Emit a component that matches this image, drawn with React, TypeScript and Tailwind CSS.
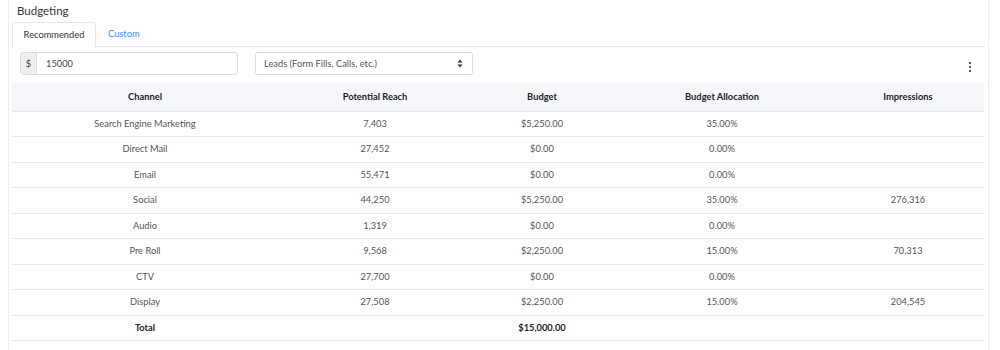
import React from 'react'

const rows = [
  { channel: 'Search Engine Marketing', reach: '7,403', budget: '$5,250.00', alloc: '35.00%', imp: '' },
  { channel: 'Direct Mail', reach: '27,452', budget: '$0.00', alloc: '0.00%', imp: '' },
  { channel: 'Email', reach: '55,471', budget: '$0.00', alloc: '0.00%', imp: '' },
  { channel: 'Social', reach: '44,250', budget: '$5,250.00', alloc: '35.00%', imp: '276,316' },
  { channel: 'Audio', reach: '1,319', budget: '$0.00', alloc: '0.00%', imp: '' },
  { channel: 'Pre Roll', reach: '9,568', budget: '$2,250.00', alloc: '15.00%', imp: '70,313' },
  { channel: 'CTV', reach: '27,700', budget: '$0.00', alloc: '0.00%', imp: '' },
  { channel: 'Display', reach: '27,508', budget: '$2,250.00', alloc: '15.00%', imp: '204,545' },
]

export default function App() {
  return (
    <div className="w-[1000px] h-[350px] bg-white overflow-hidden font-['Lato',sans-serif] text-[#212529]">
      <div className="ml-[8px] w-[981px] h-[360px] border-x border-b border-[#eeeeee] px-[3px]">
        {/* Title */}
        <div className="h-[22px] pl-[5px] pt-[4px] text-[11.5px] leading-[14px] text-[#333]">Budgeting</div>

        {/* Tabs */}
        <div className="flex h-[25px] border-b border-[#e6e6e6]">
          <div className="h-[25px] w-[84px] flex items-center justify-center border border-b-0 border-[#e6e6e6] rounded-t-[4px] bg-white text-[9.3px] -mb-px text-[#333]">
            Recommended
          </div>
          <div className="h-[24px] pl-[12px] flex items-center text-[9.3px] text-[#3d8ef8]">Custom</div>
        </div>

        {/* Controls */}
        <div className="flex items-center mt-[5px] pl-[8px] pr-[14px] h-[23px]">
          <div className="flex w-[218px] h-[23px] border border-[#dcdcdc] rounded-[3px] text-[9.3px]">
            <div className="w-[16px] flex items-center justify-center bg-[#eceeef] border-r border-[#dcdcdc] text-[#444]">$</div>
            <div className="flex-1 flex items-center pl-[9px] text-[#444]">15000</div>
          </div>
          <div className="ml-[17px] flex items-center justify-between w-[218px] h-[23px] border border-[#dcdcdc] rounded-[3px] pl-[8px] pr-[9px] text-[9.3px] text-[#555]">
            <span>Leads (Form Fills, Calls, etc.)</span>
            <svg width="6" height="9" viewBox="0 0 6 9" fill="#333">
              <path d="M3 0.5 L5.5 3.5 H0.5 Z" />
              <path d="M3 8.5 L5.5 5.5 H0.5 Z" />
            </svg>
          </div>
          <div className="ml-auto flex flex-col gap-[1.5px] items-center mt-[7px]">
            <span className="w-[2.5px] h-[2.5px] rounded-full bg-[#222]" />
            <span className="w-[2.5px] h-[2.5px] rounded-full bg-[#222]" />
            <span className="w-[2.5px] h-[2.5px] rounded-full bg-[#222]" />
          </div>
        </div>

        {/* Table */}
        <table className="mt-[8px] w-[972px] border-collapse table-fixed text-[9.3px]">
          <colgroup>
            <col className="w-[266px]" />
            <col className="w-[194px]" />
            <col className="w-[140px]" />
            <col className="w-[220px]" />
            <col className="w-[152px]" />
          </colgroup>
          <thead>
            <tr className="h-[28px] bg-[#f6f7fb] border-b border-[#e9e9e9]">
              <th className="font-bold text-[#222]">Channel</th>
              <th className="font-bold text-[#222]">Potential Reach</th>
              <th className="font-bold text-[#222]">Budget</th>
              <th className="font-bold text-[#222]">Budget Allocation</th>
              <th className="font-bold text-[#222]">Impressions</th>
            </tr>
          </thead>
          <tbody>
            {rows.map((r) => (
              <tr key={r.channel} className="h-[25.5px] border-b border-[#e9e9e9] text-center text-[#555]">
                <td>{r.channel}</td>
                <td>{r.reach}</td>
                <td>{r.budget}</td>
                <td>{r.alloc}</td>
                <td>{r.imp}</td>
              </tr>
            ))}
            <tr className="h-[25.5px] border-b border-[#e9e9e9] text-center font-bold text-[#222]">
              <td>Total</td>
              <td></td>
              <td>$15,000.00</td>
              <td></td>
              <td></td>
            </tr>
          </tbody>
        </table>
      </div>
    </div>
  )
}
